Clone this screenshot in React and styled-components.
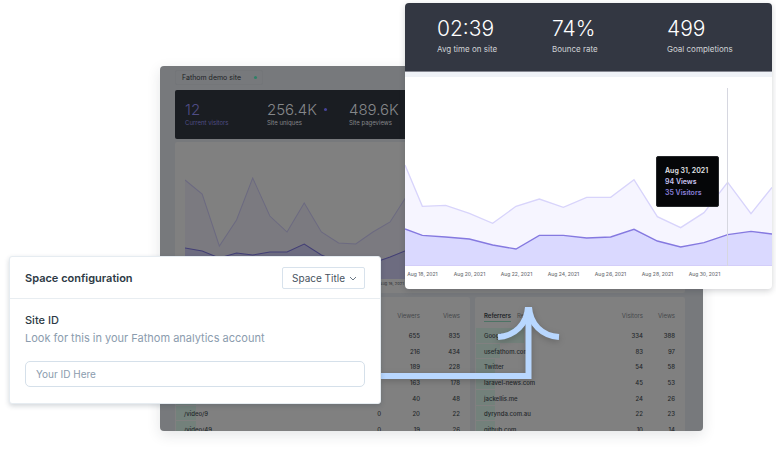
import React from "react";
import styled, { createGlobalStyle } from "styled-components";

const GlobalStyle = createGlobalStyle`
  * { box-sizing: border-box; }
  body {
    margin: 0;
    background: #fff;
    font-family: Inter, "Liberation Sans", sans-serif;
    overflow: hidden;
  }
  button, input, select { font-family: inherit; }
`;

const Stage = styled.main`
  position: relative;
  padding: 66px 73px 18px 160px;
`;

/* Dimmed dashboard */
const Dashboard = styled.section`
  height: 365px;
  padding: 4px 18px 0 15px;
  overflow: hidden;
  border-radius: 4px;
  background: #77797c;
  box-shadow: 0 4px 14px rgba(30, 40, 50, 0.12);
`;

const SitePicker = styled.button`
  display: flex;
  align-items: center;
  justify-content: space-between;
  width: 88px;
  height: 15px;
  margin-bottom: 5px;
  padding: 0 5px 0 6px;
  border: 1px solid #747679;
  border-radius: 2px;
  background: none;
  color: #202326;
  font-size: 7px;
  white-space: nowrap;
`;

const Dot = styled.i`
  width: 3px;
  height: 3px;
  border-radius: 50%;
  background: ${(p) => p.$color};
`;

const DimStats = styled.div`
  display: grid;
  grid-template-columns: repeat(6, 1fr);
  height: 49px;
  padding: 10px 8px 0 10px;
  border-radius: 2px;
  background: #1a1d22;
`;

const DimStat = styled.div`
  color: ${(p) => (p.$accent ? "#504d85" : "#85878a")};
  font-size: 6px;
  line-height: 8px;
  white-space: nowrap;
`;

const DimValue = styled.div`
  display: flex;
  align-items: center;
  gap: 7px;
  font-size: 15px;
  font-weight: 300;
  line-height: 19px;
`;

const DimChart = styled.div`
  height: 151px;
  margin-top: 3px;
  border-radius: 2px;
  background: #808080;
`;

const DimPlot = styled.svg`
  display: block;
  width: calc(100% - 20px);
  height: 137px;
  margin-left: 10px;
`;

const DimDates = styled.div`
  display: grid;
  grid-template-columns: repeat(14, 1fr);
  padding: 2px 0 0 27px;
  color: #3f4144;
  font-size: 4px;
  font-weight: 500;
  line-height: 6px;
  text-align: center;
  white-space: nowrap;
`;

const Lists = styled.div`
  display: grid;
  grid-template-columns: 295fr 210fr;
  gap: 5px;
  margin-top: 4px;
`;

const ListPanel = styled.div`
  height: 150px;
  padding: 10px 10px 0 1px;
  border-radius: 2px;
  background: #808080;
`;

const ListTable = styled.table`
  width: 100%;
  height: 130px;
  border-collapse: collapse;
  table-layout: fixed;
  color: #24282b;
  font-size: 6px;
  font-weight: 500;
`;

const HeadCell = styled.th`
  width: ${(p) => p.$width || "auto"};
  height: 21px;
  padding: ${(p) => (p.$first ? "0 0 0 8px" : "0")};
  vertical-align: top;
  color: #46484b;
  font-weight: 400;
  line-height: 18px;
  text-align: ${(p) => (p.$first ? "left" : "right")};
`;

const ListTab = styled.button`
  height: 15px;
  margin-right: 6px;
  padding: 4px 0 0;
  border: 0;
  border-bottom: 1px solid ${(p) => (p.$active ? "#4d7365" : "transparent")};
  background: none;
  color: ${(p) => (p.$active ? "#202427" : "#46484b")};
  font-size: 6px;
  font-weight: ${(p) => (p.$active ? 600 : 400)};
  line-height: 8px;
`;

const NameCell = styled.td`
  padding: 0 0 0 8px;
  overflow: visible;
  white-space: nowrap;
  background: linear-gradient(#73817b, #73817b) 0 0 / ${(p) => p.$bar}px calc(100% - 1px) no-repeat;
`;

const NumberCell = styled.td`
  padding: 0;
  text-align: right;
`;

/* Highlighted chart card */
const ChartCard = styled.section`
  position: absolute;
  top: 3px;
  right: 4px;
  left: calc(50% + 17px);
  overflow: hidden;
  border-radius: 4px;
  background: #fff;
  box-shadow: 0 2px 6px rgba(30, 35, 45, 0.2);
`;

const Stats = styled.div`
  display: grid;
  grid-template-columns: 115fr 115fr 105fr;
  height: 69px;
  padding: 12px 0 0 32px;
  border-bottom: 1px solid #858791;
  background: #333742;
`;

const Stat = styled.div`
  color: #d1d3d6;
  font-size: 8px;
  line-height: 12px;
  white-space: nowrap;
`;

const StatValue = styled.div`
  margin-bottom: 1px;
  color: #fff;
  font-size: 21px;
  font-weight: 300;
  line-height: 27px;
`;

const PlotArea = styled.div`
  padding-bottom: 10px;
  border-top: 5px solid #eff2f7;
`;

const Plot = styled.svg`
  display: block;
  width: 100%;
  height: 189px;
`;

const Dates = styled.div`
  display: grid;
  grid-template-columns: repeat(7, 1fr);
  margin: 3px 44px 0 -6px;
  color: #6f7277;
  font-size: 5px;
  font-weight: 500;
  line-height: 10px;
  text-align: center;
  white-space: nowrap;
`;

const Tooltip = styled.div`
  position: absolute;
  top: 153px;
  right: 53px;
  width: 63px;
  padding: 8px 0 8px 8px;
  border: 1px solid #25272a;
  border-radius: 2px;
  background: #050608;
  font-size: 7px;
  font-weight: 600;
  line-height: 11px;
  white-space: nowrap;
`;

const TooltipLine = styled.div`
  color: ${(p) => p.$color};
`;

/* Arrow between the cards */
const Arrow = styled.svg`
  position: absolute;
  top: 307px;
  left: calc(50% - 7px);
  width: 180px;
  height: 72px;
  filter: drop-shadow(0 2px 3px rgba(0, 0, 0, 0.2));
`;

/* Configuration card */
const ConfigCard = styled.form`
  position: absolute;
  top: 256px;
  left: 9px;
  width: calc(50% - 16px);
  border: 1px solid #e6ecf1;
  border-radius: 3px;
  background: #fff;
  box-shadow: 0 2px 5px rgba(30, 50, 70, 0.2);
`;

const ConfigHeader = styled.header`
  display: flex;
  align-items: center;
  justify-content: space-between;
  height: 42px;
  padding: 0 15px;
  border-bottom: 1px solid #e8edf1;
`;

const Title = styled.h2`
  margin: 0;
  color: #2d3a45;
  font-size: 11px;
  font-weight: 600;
`;

const SelectWrap = styled.div`
  position: relative;
  display: flex;
`;

const Select = styled.select`
  width: 83px;
  height: 22px;
  padding: 0 16px 0 9px;
  appearance: none;
  border: 1px solid #d8e2ec;
  border-radius: 2px;
  background: #fff;
  color: #47535f;
  font-size: 10px;
`;

const Chevron = styled.svg`
  position: absolute;
  top: 8px;
  right: 8px;
  width: 8px;
  height: 7px;
  pointer-events: none;
`;

const ConfigBody = styled.div`
  display: flex;
  flex-direction: column;
  padding: 13px 15px 16px;
`;

const Label = styled.label`
  color: #2d3a45;
  font-size: 11px;
  font-weight: 500;
  line-height: 16px;
`;

const Hint = styled.p`
  margin: 2px 0 14px;
  color: #8b9cae;
  font-size: 11px;
  line-height: 17px;
  white-space: nowrap;
`;

const TextInput = styled.input`
  width: 100%;
  height: 26px;
  padding: 0 10px;
  border: 1px solid #d5e0ea;
  border-radius: 5px;
  outline: none;
  color: #2d3a45;
  font-size: 10px;
  &::placeholder { color: #8b9cae; }
`;

const pages = [
  ["", "5", "655", "835"],
  ["", "3", "216", "434"],
  ["", "8", "189", "228"],
  ["", "5", "163", "178"],
  ["", "5", "40", "48"],
  ["/video/9", "0", "20", "22"],
  ["/video/49", "0", "19", "26"],
];

const referrers = [
  ["Google", 48, "334", "388"],
  ["usefathom.com", 24, "83", "97"],
  ["Twitter", 19, "54", "58"],
  ["laravel-news.com", 19, "45", "53"],
  ["jackellis.me", 19, "24", "26"],
  ["dyrynda.com.au", 19, "22", "23"],
  ["github.com", 19, "10", "14"],
];

const dimViews =
  "0,38 17,52 34,104 51,78 67,36 84,74 101,90 118,61 135,90 152,101 169,102 186,90 203,80 220,53 237,94 254,93 271,101 288,111 305,94 322,87 339,95 356,85 373,85 390,68 407,105 424,116 441,101 458,70 475,102 485,80";
const dimVisitors =
  "0,106 17,109 34,116 51,111 67,113 84,110 101,110 118,102 135,113 152,120 169,122 186,121 203,115 220,108 237,114 254,116 271,118 288,124 305,128 322,114 339,114 356,117 373,116 390,108 407,120 424,126 441,121 458,113 475,110 485,112";

const views =
  "15,60 67,184 137,181 208,205 278,235 348,184 418,162 490,187 560,157 632,157 702,104 772,215 842,248 912,203 983,112 1053,206 1116,127";
const visitors =
  "15,252 67,271 137,276 208,282 278,300 348,312 418,271 490,271 560,279 632,276 702,253 772,288 842,306 912,293 983,269 1053,259 1116,267";

export default function App() {
  return (
    <Stage>
      <GlobalStyle />
      <Dashboard>
        <SitePicker type="button">
          Fathom demo site <Dot $color="#2f8067" />
        </SitePicker>
        <DimStats>
          <DimStat $accent>
            <DimValue>12</DimValue>Current visitors
          </DimStat>
          <DimStat>
            <DimValue>
              256.4K <Dot $color="#46439a" />
            </DimValue>
            Site uniques
          </DimStat>
          <DimStat>
            <DimValue>489.6K</DimValue>Site pageviews
          </DimStat>
        </DimStats>
        <DimChart>
          <DimPlot viewBox="0 0 485 137" preserveAspectRatio="none" aria-hidden="true">
            <polygon points={`0,137 ${dimViews} 485,137`} fill="#7b7a80" />
            <polygon points={`0,137 ${dimVisitors} 485,137`} fill="#6d6c80" />
            <polyline points={dimViews} fill="none" stroke="#6c6a80" />
            <polyline points={dimVisitors} fill="none" stroke="#433f75" />
          </DimPlot>
          <DimDates>
            {Array.from({ length: 13 }, (_, i) => (
              <span key={i}>Aug {6 + i * 2}, 2021</span>
            ))}
          </DimDates>
        </DimChart>
        <Lists>
          <ListPanel>
            <ListTable>
              <thead>
                <tr>
                  <HeadCell $first />
                  <HeadCell $width="40px">Visitors</HeadCell>
                  <HeadCell $width="39px">Viewers</HeadCell>
                  <HeadCell $width="40px">Views</HeadCell>
                </tr>
              </thead>
              <tbody>
                {pages.map(([name, a, b, c], i) => (
                  <tr key={i}>
                    <NameCell $bar={20}>{name}</NameCell>
                    <NumberCell>{a}</NumberCell>
                    <NumberCell>{b}</NumberCell>
                    <NumberCell>{c}</NumberCell>
                  </tr>
                ))}
              </tbody>
            </ListTable>
          </ListPanel>
          <ListPanel>
            <ListTable>
              <thead>
                <tr>
                  <HeadCell $first>
                    <ListTab type="button" $active>Referrers</ListTab>
                    <ListTab type="button">Refs</ListTab>
                  </HeadCell>
                  <HeadCell $width="40px">Visitors</HeadCell>
                  <HeadCell $width="32px">Views</HeadCell>
                </tr>
              </thead>
              <tbody>
                {referrers.map(([name, bar, a, b]) => (
                  <tr key={name}>
                    <NameCell $bar={bar}>{name}</NameCell>
                    <NumberCell>{a}</NumberCell>
                    <NumberCell>{b}</NumberCell>
                  </tr>
                ))}
              </tbody>
            </ListTable>
          </ListPanel>
        </Lists>
      </Dashboard>

      <Arrow viewBox="0 0 180 72" fill="none" stroke="#b8d7ff" strokeWidth="6" aria-hidden="true">
        <path d="M0 69H147.500V0" />
        <path d="M117 30C134 29 146 17 147 0" />
        <path d="M178 30C161 29 149 17 148 0" />
      </Arrow>

      <ChartCard>
        <Stats>
          <Stat><StatValue>02:39</StatValue>Avg time on site</Stat>
          <Stat><StatValue>74%</StatValue>Bounce rate</Stat>
          <Stat><StatValue>499</StatValue>Goal completions</Stat>
        </Stats>
        <PlotArea>
          <Plot viewBox="15 -204 1101 567" preserveAspectRatio="none" aria-hidden="true">
            <polygon points={`15,363 ${views} 1116,363`} fill="#f6f5ff" />
            <polygon points={`15,363 ${visitors} 1116,363`} fill="#dad9ff" />
            <polyline points={views} fill="none" stroke="#d8d4fb" strokeWidth="4" />
            <polyline points={visitors} fill="none" stroke="#8579e0" strokeWidth="4" />
            <path d="M15 362H1116" stroke="#d2ccf8" strokeWidth="3" />
            <path d="M982.500 -171V363" stroke="#d6d7e0" strokeWidth="3" />
          </Plot>
          <Dates>
            {[18, 20, 22, 24, 26, 28, 30].map((d) => (
              <span key={d}>Aug {d}, 2021</span>
            ))}
          </Dates>
        </PlotArea>
        <Tooltip>
          <TooltipLine $color="#e3e4e6">Aug 31, 2021</TooltipLine>
          <TooltipLine $color="#c9c4f2">94 Views</TooltipLine>
          <TooltipLine $color="#8b80dc">35 Visitors</TooltipLine>
        </Tooltip>
      </ChartCard>

      <ConfigCard>
        <ConfigHeader>
          <Title>Space configuration</Title>
          <SelectWrap>
            <Select aria-label="Space configuration" defaultValue="title">
              <option value="title">Space Title</option>
            </Select>
            <Chevron viewBox="0 0 8 7" fill="none" stroke="#6b7885" aria-hidden="true">
              <path d="M1 2L4 5L7 2" />
            </Chevron>
          </SelectWrap>
        </ConfigHeader>
        <ConfigBody>
          <Label htmlFor="site-id">Site ID</Label>
          <Hint id="site-hint">Look for this in your Fathom analytics account</Hint>
          <TextInput id="site-id" aria-describedby="site-hint" placeholder="Your ID Here" />
        </ConfigBody>
      </ConfigCard>
    </Stage>
  );
}
